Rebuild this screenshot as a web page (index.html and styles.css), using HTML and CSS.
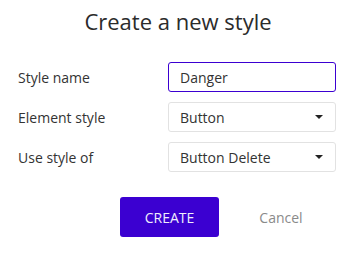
FILE: index.html
```html
<!DOCTYPE html>
<html lang="en">
  <head>
    <meta charset="UTF-8" />
    <title>Create a new style</title>
    <link rel="stylesheet" href="styles.css">
  </head>
  <body>
    <div class="dialog">
      <h1>Create a new style</h1>

      <div class="style-form">
        <div class="row">
          <label for="style_name">Style name</label>
          <input type="text" id="style_name" class="field active" value="Danger" />
        </div>
        <div class="row">
          <label>Element style</label>
          <div class="field dropdown">
            <span>Button</span>
            <span class="caret"></span>
          </div>
        </div>
        <div class="row">
          <label>Use style of</label>
          <div class="field dropdown">
            <span>Button Delete</span>
            <span class="caret"></span>
          </div>
        </div>
      </div>

      <div class="actions">
        <button class="create">CREATE</button>
        <button class="cancel">Cancel</button>
      </div>
    </div>
  </body>
</html>
```

FILE: styles.css
```css
body {
  margin: 0;
  font-family: "Open Sans", "Liberation Sans", sans-serif;
  background-color: #fff;
  color: #333;
}

.dialog {
  padding: 6px 15px 0 18px;
}

h1 {
  font-size: 22px;
  font-weight: normal;
  text-align: center;
  margin: 0 0 26px;
  line-height: 30px;
  color: #2b2b2b;
  padding-left: 2px;
}

.style-form {
  display: flex;
  flex-direction: column;
  gap: 10px;
}

.row {
  display: grid;
  grid-template-columns: 150px 1fr;
  align-items: center;
}

.row label {
  font-size: 14px;
  color: #333;
}

.field {
  box-sizing: border-box;
  height: 30px;
  width: 100%;
  padding: 0 11px;
  border: 1px solid #e2e2e2;
  border-radius: 3px;
  font-family: inherit;
  font-size: 14px;
  color: #333;
  background-color: #fff;
}

.field.active {
  border-color: #3b00d1;
  outline: none;
}

.dropdown {
  display: flex;
  align-items: center;
  justify-content: space-between;
}

.caret {
  width: 0;
  height: 0;
  border-left: 4px solid transparent;
  border-right: 4px solid transparent;
  border-top: 4px solid #222;
  margin-right: 1px;
}

.actions {
  display: flex;
  gap: 20px;
  margin-top: 25px;
  padding-left: 102px;
}

.actions button {
  font-family: inherit;
  font-size: 14px;
  border: none;
  cursor: pointer;
  height: 40px;
}

.create {
  width: 99px;
  background-color: #3b00d1;
  color: #f0eefc;
  border-radius: 3px;
}

.cancel {
  width: 84px;
  background: none;
  color: #8a8a8a;
}
```
